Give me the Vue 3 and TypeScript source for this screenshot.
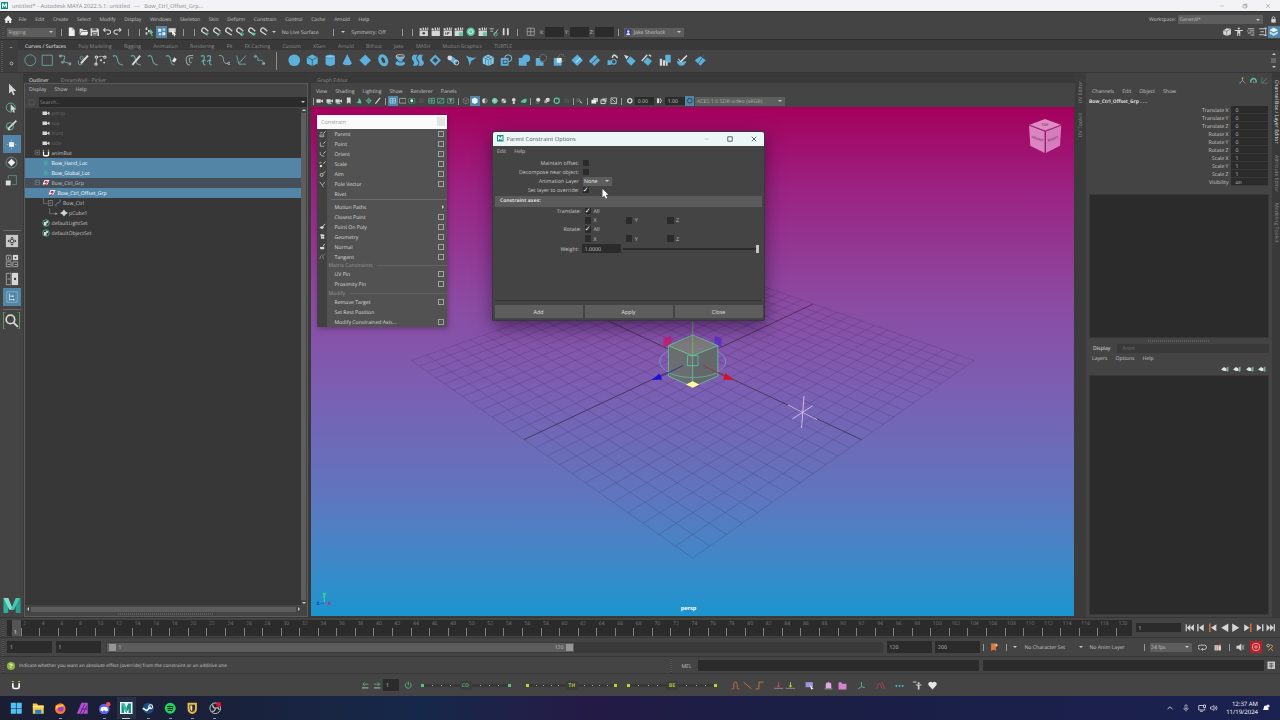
<template>
  <div class="app">
    <header class="titlebar">
      <svg class="ic" viewBox="0 0 16 16" v-html="icons.maya" />
      <span class="title">untitled* - Autodesk MAYA 2022.5.1: untitled &nbsp; --- &nbsp; Bow_Ctrl_Offset_Grp...</span>
      <span class="win-buttons">
        <svg v-for="b in ['min', 'restore', 'close']" :key="b" class="ic" viewBox="0 0 16 16" v-html="icons[b]" />
      </span>
    </header>

    <nav class="menubar">
      <svg class="ic" viewBox="0 0 16 16" v-html="icons.home" />
      <span v-for="m in mainMenu" :key="m">{{ m }}</span>
      <div class="workspace">
        <span>Workspace:</span>
        <div class="select">General*<i class="caret" /></div>
        <svg class="ic" viewBox="0 0 16 16" v-html="icons.lock" />
      </div>
    </nav>

    <div class="tools">
      <i class="grip" />
      <div class="select mode">Rigging<i class="caret" /></div>
      <div v-for="(c, i) in toolCells" :key="i" class="cell" :class="[c.kind, { on: c.on }]" :style="{ width: c.w + 'px' }">
        <svg v-if="c.kind === 'icon'" class="ic" viewBox="0 0 16 16" v-html="icons[c.v]" />
        <i v-else-if="c.kind === 'rule'" class="bar" />
        <i v-else-if="c.kind === 'arrow'" class="caret" />
        <template v-else>{{ c.v }}</template>
      </div>
      <div class="select user"><svg class="ic" viewBox="0 0 16 16" v-html="icons.user" />Jake Sherlock<i class="caret" /></div>
      <div class="tools-right">
        <span v-for="n in ['modelkit', 'human', 'attrs', 'toolset', 'layers']" :key="n" class="cell" :class="{ on: n === 'layers' }">
          <svg class="ic" viewBox="0 0 16 16" v-html="icons[n]" />
        </span>
      </div>
    </div>

    <div class="shelf">
      <div class="shelf-side"><i class="grip" /><b>–</b><svg class="ic" viewBox="0 0 16 16" v-html="icons.gear" /></div>
      <div class="shelf-body">
        <div class="shelf-tabs">
          <span v-for="(t, i) in shelfTabs" :key="t" :class="{ active: i === 0 }">{{ t }}</span>
        </div>
        <div class="shelf-icons">
          <span v-for="(n, i) in shelfIcons" :key="i" class="cell">
            <i v-if="n === '|'" class="divider" />
            <svg v-else class="ic" viewBox="0 0 16 16" v-html="icons[n]" />
          </span>
          <div class="spinner"><i class="up" /><i class="knob" /><i class="caret" /></div>
        </div>
      </div>
    </div>

    <main class="main">
      <aside class="toolbox">
        <span v-for="(t, i) in toolbox" :key="i" class="tool" :class="[t.cls]">
          <svg class="ic" viewBox="0 0 16 16" v-html="icons[t.icon]" />
        </span>
        <svg class="ic logo" viewBox="0 0 16 16" v-html="icons.mayaBig" />
      </aside>

      <section class="outliner">
        <div class="panel-tabs"><span class="active">Outliner</span><span>DreamWall - Picker</span></div>
        <div class="outliner-box">
          <div class="panel-menu"><span>Display</span><span>Show</span><span>Help</span></div>
          <div class="search">
            <svg class="ic" viewBox="0 0 16 16" v-html="icons.dashed" />
            <div class="search-field">Search...<i class="caret" /></div>
          </div>
          <div class="tree-wrap">
            <ul class="tree">
              <li v-for="n in nodes" :key="n.name" :class="n.state" :style="{ paddingLeft: n.indent + 'px' }">
                <svg v-if="n.box" class="ic twig" viewBox="0 0 16 16" v-html="icons[n.box]" />
                <svg class="ic" viewBox="0 0 16 16" v-html="icons[n.icon]" />
                <span>{{ n.name }}</span>
              </li>
            </ul>
            <div class="vscroll"><i class="up" /><i class="track" /><i class="caret" /></div>
          </div>
          <div class="hscroll"><i class="left" /><i class="track" /><i class="right" /></div>
          <i class="dots" />
        </div>
      </section>

      <section class="view-panel">
        <div class="panel-tabs"><span>Graph Editor</span></div>
        <div class="panel-menu">
          <span v-for="m in ['View', 'Shading', 'Lighting', 'Show', 'Renderer', 'Panels']" :key="m">{{ m }}</span>
        </div>
        <div class="panel-tools">
          <div v-for="(c, i) in panelCells" :key="i" class="cell" :class="[c.kind, { on: c.on }]" :style="{ width: c.w + 'px' }">
            <svg v-if="c.kind === 'icon'" class="ic" viewBox="0 0 16 16" v-html="icons[c.v]" />
            <i v-else-if="c.kind === 'rule'" class="bar" />
            <template v-else>{{ c.v }}</template>
          </div>
          <div class="select aces">ACES 1.0 SDR-video (sRGB)<i class="caret" /></div>
        </div>

        <div class="viewport">
          <svg class="scene" viewBox="311 107 763 509">
            <path :d="gridPath" stroke="#3b2a58" stroke-opacity="0.38" stroke-width="0.6" fill="none" />
            <path :d="axisPath" stroke="#3a2c40" stroke-opacity="0.85" stroke-width="0.9" fill="none" />
            <g fill="none" stroke="#d9c4f5" stroke-width="0.9">
              <path d="M804 396L801.5 428M788 405L817 419.5M812.7 405.7L792.4 419" />
            </g>
            <path d="M663.5 338l8-2v9l-8 2z" fill="#b92682" />
            <path d="M714.5 336l7 2v9l-7-2z" fill="#6234c4" />
            <ellipse cx="692.7" cy="361.5" rx="33" ry="16" fill="none" stroke="#7e9bd8" stroke-width="0.8" />
            <path d="M692.7 335L717.8 345.7V376L692.7 387L668.4 376V345.7z" fill="#6a6e70" />
            <path d="M692.7 335L717.8 345.7L692.7 355.7L668.4 345.7z" fill="#7b7a7c" />
            <path d="M692.7 355.7L717.8 345.7V376L692.7 387z" fill="#63686a" />
            <path d="M692.7 335L717.8 345.7V376L692.7 387L668.4 376V345.7zM668.4 345.7L692.7 355.7L717.8 345.7M692.7 355.7V387M687.4 355.7h10.6v10h-10.6z" fill="none" stroke="#67c9a2" stroke-width="0.8" />
            <path d="M668.4 372.500Q678 377.500 692.7 377.500T717.800 372.500" fill="none" stroke="#62b7a5" stroke-width="0.8" />
            <path d="M692.7 321V355" stroke="#6fbf5a" stroke-width="0.9" />
            <path d="M683 365.500L660 377" stroke="#2b2f90" stroke-width="0.9" />
            <path d="M703 365.500L726 377" stroke="#a02c48" stroke-width="0.9" />
            <path d="M651.6 380L659.500 373.500L662.200 379.500z" fill="#1a10d8" />
            <path d="M733.5 380L725.500 373L723.200 379.500z" fill="#d80f24" />
            <path d="M686 384.500L692.700 381.300L699.300 384.500L692.700 387.800z" fill="#fdfb9a" />
            <g class="viewcube">
              <path d="M1045 119L1061.3 125L1045.3 131L1029 125z" fill="#de8bc6" />
              <path d="M1029 125.500L1044.700 131.500V153L1030.300 145.700z" fill="#dd85c4" />
              <path d="M1061.3 125.500L1045.900 131.500V153L1060 145.700z" fill="#d67cbd" />
              <path d="M1029 125L1045.3 131L1061.3 125M1045.3 131V153" stroke="#8b2a6c" stroke-width="0.9" fill="none" />
              <text x="1045" y="125.900">TOP</text>
              <text x="1037" y="140" transform="rotate(20 1037 140)">FRONT</text>
              <text x="1053.500" y="140" transform="rotate(-20 1053.500 140)">RIGHT</text>
            </g>
            <g stroke-width="0.9" fill="none">
              <path d="M324.300 603V596" stroke="#39e08a" />
              <path d="M324.300 603l4 1" stroke="#7c6a98" />
              <path d="M324.300 603l-4 0.500" stroke="#2b5de0" />
            </g>
            <g class="axis">
              <text x="322.500" y="595.500" fill="#35e58c">y</text>
              <text x="316.500" y="604.500" fill="#1838d8">z</text>
              <text x="328" y="604.500" fill="#a04070">x</text>
            </g>
            <text class="camera" x="688.500" y="610">persp</text>
          </svg>

          <div class="tearoff">
            <div class="tearoff-title">Constrain<i /></div>
            <div class="tearoff-body">
              <template v-for="(it, i) in constrainMenu" :key="i">
                <div v-if="it.type === 'sep'" class="sep" />
                <div v-else-if="it.type === 'head'" class="section">{{ it.label }}<i /></div>
                <div v-else class="item">
                  <span class="gutter"><svg v-if="it.icon" class="ic" viewBox="0 0 16 16" v-html="icons[it.icon]" /></span>
                  <span class="label">{{ it.label }}</span>
                  <i v-if="it.type === 'sub'" class="right" />
                  <i v-else-if="it.type === 'opt'" class="optbox" />
                </div>
              </template>
            </div>
          </div>

          <div class="dialog">
            <div class="dialog-title">
              <svg class="ic" viewBox="0 0 16 16" v-html="icons.maya" />
              <span>Parent Constraint Options</span>
              <svg v-for="b in ['min', 'max', 'closeBlack']" :key="b" class="ic btn" viewBox="0 0 16 16" v-html="icons[b]" />
            </div>
            <div class="dialog-menu"><span>Edit</span><span>Help</span></div>
            <div class="dialog-body">
              <div class="field-row"><label>Maintain offset:</label><i class="check" /></div>
              <div class="field-row"><label>Decompose near object:</label><i class="check" /></div>
              <div class="field-row"><label>Animation Layer</label><div class="select layer">None<i class="caret" /></div></div>
              <div class="field-row"><label>Set layer to override:</label><i class="check ticked">✓</i></div>
              <div class="group-head">Constraint axes:</div>
              <template v-for="g in ['Translate:', 'Rotate:']" :key="g">
                <div class="field-row axes"><label>{{ g }}</label><i class="check ticked">✓</i><span>All</span></div>
                <div class="field-row axes">
                  <label />
                  <span v-for="a in ['X', 'Y', 'Z']" :key="a" class="axis-opt"><i class="check" />{{ a }}</span>
                </div>
              </template>
              <div class="field-row weight"><label>Weight:</label><div class="num">1.0000</div><div class="slider"><i /></div></div>
            </div>
            <div class="dialog-buttons"><button>Add</button><button>Apply</button><button>Close</button></div>
          </div>

          <svg class="pointer" viewBox="0 0 16 16" v-html="icons.cursor" />
        </div>
      </section>

      <div class="side-tabs"><span>UV Editor</span><span>UV Toolkit</span></div>

      <section class="channels">
        <div class="channel-icons">
          <svg v-for="n in ['manip', 'speed', 'hyper']" :key="n" class="ic" viewBox="0 0 16 16" v-html="icons[n]" />
        </div>
        <div class="panel-menu"><span>Channels</span><span>Edit</span><span>Object</span><span>Show</span></div>
        <div class="node-name">Bow_Ctrl_Offset_Grp . . .</div>
        <div class="attrs">
          <div v-for="a in attributes" :key="a[0]" class="attr"><span>{{ a[0] }}</span><div>{{ a[1] }}</div></div>
        </div>
        <div class="well top" />
        <i class="dots" />
        <div class="layer-tabs"><span class="active">Display</span><span>Anim</span></div>
        <div class="panel-menu layer-menu"><span>Layers</span><span>Options</span><span>Help</span></div>
        <div class="layer-icons">
          <svg v-for="n in 4" :key="n" class="ic" viewBox="0 0 16 16" v-html="icons.layer" />
        </div>
        <div class="well bottom" />
      </section>

      <div class="far-tabs"><span class="active">Channel Box / Layer Editor</span><span>Attribute Editor</span><span>Modeling Toolkit</span></div>
    </main>

    <div class="timeline">
      <i class="grip" />
      <div class="frames">
        <div class="current">1</div>
        <div v-for="f in frames" :key="f" class="frame">{{ f }}</div>
      </div>
      <div class="num frame-field">1</div>
      <div class="playback">
        <svg v-for="n in playback" :key="n" class="ic" viewBox="0 0 16 16" v-html="icons[n]" />
      </div>
    </div>

    <div class="range">
      <i class="grip" />
      <div class="num">1</div>
      <div class="num">1</div>
      <div class="range-track"><div class="range-bar"><i />1<span>120</span><i /></div></div>
      <div class="num">120</div>
      <div class="num">200</div>
      <div v-for="(c, i) in rangeCells" :key="i" class="cell" :class="[c.kind, { red: c.v === 'autokey' }]" :style="{ width: c.w + 'px' }">
        <svg v-if="c.kind === 'icon'" class="ic" viewBox="0 0 16 16" v-html="icons[c.v]" />
        <i v-else-if="c.kind === 'rule'" class="bar" />
        <i v-else-if="c.kind === 'arrow'" class="caret" />
        <div v-else-if="c.kind === 'drop'" class="select">{{ c.v }}<i class="caret" /></div>
        <template v-else>{{ c.v }}</template>
      </div>
    </div>

    <div class="helpline">
      <i class="grip" />
      <b class="q">?</b>
      <span class="help-text">Indicate whether you want an absolute effect (override) from the constraint or an additive one</span>
      <i class="grip" />
      <span class="mel">MEL</span>
      <div class="cmd" />
      <div class="cmd" />
      <svg class="ic" viewBox="0 0 16 16" v-html="icons.script" />
    </div>

    <div class="animbot">
      <svg class="ic magnet" viewBox="0 0 16 16" v-html="icons.magnet" />
      <svg class="ic" viewBox="0 0 16 16" v-html="icons.nudgeL" />
      <svg class="ic" viewBox="0 0 16 16" v-html="icons.nudgeR" />
      <div class="num">1</div>
      <svg class="ic power" viewBox="0 0 16 16" v-html="icons.power" />
      <div v-for="t in tweens" :key="t.label" class="tween" :class="t.color" :style="{ width: t.w + 'px' }">
        <i class="sq" />
        <i v-for="n in t.dots" :key="'l' + n" class="dot" />
        <b>{{ t.label }}</b>
        <i v-for="n in t.dots" :key="'r' + n" class="dot" />
        <i class="sq" />
      </div>
      <div v-for="(c, i) in animCells" :key="i" class="cell" :style="{ width: c.w + 'px' }">
        <svg v-if="c.kind === 'icon'" class="ic" viewBox="0 0 16 16" v-html="icons[c.v]" />
      </div>
    </div>

    <footer class="taskbar">
      <span v-for="a in taskApps" :key="a" class="app-icon" :class="{ open: openApps.includes(a), focused: a === 'mayaTask' }">
        <svg class="ic" viewBox="0 0 16 16" v-html="icons[a]" />
      </span>
      <div class="tray">
        <svg v-for="n in ['chevron', 'mic', 'screen', 'volume']" :key="n" class="ic" :class="n" viewBox="0 0 16 16" v-html="icons[n]" />
        <div class="clock"><span>12:37 AM</span><span>11/19/2024</span></div>
        <svg class="ic bell" viewBox="0 0 16 16" v-html="icons.bell" />
      </div>
    </footer>
  </div>
</template>

<script setup lang="ts">
interface Cell {
  kind: string
  v: string
  w: number
  on?: boolean
}

interface TreeNode {
  name: string
  icon: string
  indent: number
  box?: string
  state?: string
}

interface MenuEntry {
  type: 'item' | 'opt' | 'sub' | 'sep' | 'head'
  label?: string
  icon?: string
}

const blue = '#5db0da'
const w = '#d6d6d6'
const teal = '#59c9a5'

const line = (d: string, color = w, width = 1.5) =>
  `<path d="${d}" fill="none" stroke="${color}" stroke-width="${width}"/>`
const fill = (d: string, color = w) => `<path d="${d}" fill="${color}"/>`
const dot = (x: number, y: number, r: number, color = w) => `<circle cx="${x}" cy="${y}" r="${r}" fill="${color}"/>`
const ring = (x: number, y: number, r: number, color = w, width = 1.3) =>
  `<circle cx="${x}" cy="${y}" r="${r}" fill="none" stroke="${color}" stroke-width="${width}"/>`

const clap = fill('M1 6h14v9H1zM1 2l3 0l1 3H1zM6 1l2 0l1 4H6.500zM10 1l2 0l1 4h-2.500zM14 1h1.500v4H14z')
const camera = fill('M1 5h9v7H1zM10 8l5-3v7l-5-3z')
const magnetShape = line('M12 13L4.500 8.500A3.600 3.600 0 0 1 9 2.500L14 7', w, 2.200)

const icons: Record<string, string> = {
  maya: fill('M0 0h16v16H0z', '#0f8f83') + fill('M2.500 13V3h2.800L8 8l2.700-5h2.800v10h-2.500V7.500L8 12L5 7.500V13z', '#fff'),
  mayaTask: fill('M0 0h16v16H0z', '#e9f5f3') + fill('M2 14V2h3.500L8 8l2.500-6H14v12h-3V8.500L8 14L5 8.500V14z', '#138f86') + fill('M2 2h3.500L9.500 11L8 14z', '#3dbfae'),
  mayaBig: fill('M0 15V1h4.500v14z', '#2fb09a') + fill('M0 1h4.500L9 12H5.500z', '#7fe0cf') + fill('M11.500 1H16v14h-4.500z', '#2ca08e') + fill('M11.500 1H15L10 12H6.800z', '#45c4ae'),
  min: line('M2 8h12', '#777', 0.9),
  restore: line('M3 5h8v8H3zM6 5V3h7v8h-2', '#666', 1.1),
  close: line('M3 3l10 10M13 3L3 13', '#666', 1.1),
  max: line('M2 2h12v12H2z', '#222', 1.8),
  closeBlack: line('M2 2l12 12M14 2L2 14', '#222', 1.8),
  home: fill('M8 1L16 9h-2.500v6h-4v-4h-3v4h-4V9H0z', '#eee'),
  lock: fill('M3 7h10v8H3z') + line('M5 7V4.500a3 3 0 0 1 6 0V7', w, 1.8),
  file: fill('M3 1h6l4 4v10H3z', '#eee') + line('M9 1v4h4', '#888', 1),
  folder: fill('M1 3h5l1 2h7v2H4L1 13z', '#ddd') + fill('M4.500 8H16l-2.500 6H1.500z', '#eee'),
  save: fill('M1 2h12l2 2v11H1z') + fill('M4 2h7v4H4zM3.500 9h9v6h-9z', '#555') + fill('M5 10.500h6v1.200H5zM5 13h6v1H5z'),
  undo: line('M3 5h8a3.500 3.500 0 0 1 0 7H8M5.500 2L2.500 5L5.500 8', w, 1.700),
  redo: line('M13 5H5a3.500 3.500 0 0 0 0 7h3M10.500 2l3 3L10.500 8', w, 1.700),
  selH: fill('M1 1h3v4H1zM5 5h3v4H5zM1 9h3v4H1z') + fill('M9 3l5 7h-2.500l1.500 5h-2l-1-4l-2 1z', teal),
  selO: fill('M2 3h5v5H2zM9 9h5v5H9z', '#e8f2f8') + dot(11.500, 4.500, 2.500, '#9bd6f0') + dot(5, 12, 2, '#bfe7f7'),
  selC: fill('M1 2h12v7H1z') + fill('M7 5l7 8h-3l1 3l-2-1l-1-3l-2 1z', '#fff'),
  snap1: magnetShape + line('M9 11h6M12 8v7', teal, 1),
  snap2: magnetShape + line('M8 14q5 1 6-6', teal, 1.500),
  snap3: magnetShape + dot(12, 13, 1.200),
  snap4: magnetShape + ring(11.500, 12, 2.500, teal),
  snap5: magnetShape + fill('M9 9l6 2l-3 4l-4-2z', teal),
  snap6: magnetShape,
  clap: clap + dot(8, 10.500, 2.200, '#444'),
  clapPlain: clap,
  clapIpr: clap + fill('M4 9h1.500v4H4zM7 9h4v2H8.500v2H7z', '#444'),
  clapGear: clap + dot(11.500, 12, 3.600, teal),
  sphere: dot(8, 8, 7, teal) + ring(8, 8, 3.500, '#e0f5ef', 1.500),
  light: line('M1 3h7M2 7h5M9 13L15 4', w, 1.300) + ring(11, 12, 3, teal),
  pause: fill('M3 2h3v12H3zM10 2h3v12h-3z'),
  gridbox: line('M2 2h12v12H2zM8 2v12M2 8h12', '#aaa', 1.300),
  user: fill('M1 1h14v14H1z', '#2b3a8f') + dot(8, 6, 3, '#dfe3ff') + fill('M3 15q0-5 5-5t5 5z', '#dfe3ff'),
  modelkit: fill('M2 6l6-4l7 1v9l-7 3l-6-3z') + line('M8 7v8M2 6l6 1l7-4', '#666', 1),
  human: dot(8, 2.500, 1.800) + fill('M1 5h14v1.800h-4.500V15H9v-4H7v4H5.500V6.800H1z'),
  attrs: line('M3 3h11M6 6.500h8M3 10h6M8 13.500h6M2 6.500h2M11 10h3', w, 1.400),
  toolset: line('M2 3h9M4 8h6M2 13h9M13 2v12M10 2h5M10 14h5', w, 1.500),
  layers: fill('M8 1l7 4l-7 4l-7-4z', '#e6f4fb') + fill('M1 7l7 4l7-4v4l-7 4l-7-4z', '#c2dcea'),
  gear: ring(8, 8, 4.500, '#ccc', 2.500),
  // curve shelf
  circle: ring(8, 8, 7, '#67a9a6', 1.100),
  square: line('M1.500 1.500h13v13h-13z', '#67a9a6', 1.100),
  cv: line('M3 2.500q6-1 4 3t1 5q3 0 5 2', '#67a9a6', 1.300) + fill('M0 1h3.500v3H0zM3 9h3v3H3zM12.500 11h3v3.500h-3z', '#8a9a9a'),
  pencil: line('M2 8q-2 8 5 5', '#67a9a6', 1.200) + line('M5 12L14 2', '#ddd', 2.600) + ring(6, 5, 2, '#67a9a6', 1),
  arc3: line('M3 14V8q0-5 6-5t5 1', '#aaa', 1.100) + ring(2.500, 13, 1.500) + dot(9, 8, 1.400) + dot(13, 11, 1.200) + ring(14, 4, 1.500) + ring(3, 4, 1.500),
  curve: line('M1 3q5-3 6 4t7 7', '#67a9a6', 1.400),
  curveCut: line('M1 3q5-3 6 4t7 7', '#67a9a6', 1.400) + line('M3 14L13 2', '#ddd', 2.300),
  curveIns: line('M1 3q5-3 6 4t7 7', '#67a9a6', 1.400),
  curveAdd: line('M1 3q5-3 6 4t5 7', '#67a9a6', 1.400) + fill('M12 4l3 3l-3 4l-3-2z', '#e5e5e5'),
  offset: line('M13 2Q3 1 4 8t5 6M13 5Q7 4 8 8t3 3', '#9aa', 1.300),
  rebuild: line('M1 3q6-3 4 4t2 7M9 3q6-3 4 4t2 7', '#67a9a6', 1.600) + line('M2 10q4-4 5-1M9 10q4-4 5-1', '#67a9a6', 1.300),
  extend: line('M1 2q6-1 6 5t6 5', '#8aa', 1.200) + ring(14, 12, 1.500, '#ccc', 1),
  bend: line('M2 2l3 11h9M5 12L14 2', '#67a9a6', 1.200),
  smooth: line('M2 3q6 0 4 5h4q4 0 2 6', '#67a9a6', 1.200) + ring(3, 3, 1.500, '#9aa', 1) + dot(14, 12, 1.500, '#aaa'),
  // surface shelf
  ball: dot(8, 8, 7.500, blue),
  cube: fill('M8 .5L15 4v8L8 15.500L1 12V4z', blue) + line('M1 4l7 3.500L15 4M8 7.500v8', '#2f5f7a', 1.100),
  cyl: fill('M2 3v10q6 4.500 12 0V3z', blue) + '<ellipse cx="8" cy="3.200" rx="6" ry="2.300" fill="#79c6ea" stroke="#3a6f8c" stroke-width=".7"/>',
  cone: fill('M8 0l6 12.500q-6 4-12 0z', blue),
  plane: fill('M8 0.500L15.500 8L8 15.500L.5 8z', blue),
  torus: '<ellipse cx="8" cy="8" rx="4" ry="6" fill="none" stroke="#5db0da" stroke-width="4" transform="rotate(-25 8 8)"/>',
  revolve: fill('M2 2q6 5 12 0q-1 5-4 6q5 2 4 5q-6 4-12 0q-1-3 4-5Q2 7 2 2z', blue) + '<ellipse cx="8" cy="2.500" rx="5.500" ry="1.700" fill="#444" stroke="#ddd" stroke-width="1"/>' + line('M5 9.500q4 2 8 0', '#333', 1),
  loft: fill('M2 1h5q-3 5 0 8t-1 6H1q3-4 0-7t1-7zM9 1h5q-3 5 0 8t-1 6H8q3-4 0-7t1-7z', blue),
  planar: line('M8 2.500L13.500 8L8 13.500L2.500 8z', blue, 2.600),
  extrude: line('M4 5l8 6', blue, 6) + dot(3.500, 5, 3, w) + ring(12, 11, 3, w, 1.100),
  birail: fill('M1 2q6 4 14 2l-7 5l-2 6q-1-8-5-13z', blue),
  boundary: fill('M8 .5L15 4v8L8 15.500L1 12V4z', '#8ccbe8') + line('M1 4l7 3.500L15 4M8 7.500v8M4.500 2.200L11.500 6v7.500M11 2.200L4.500 6v7.500', '#2f6f8a', .8),
  booleanA: fill('M1 5h10v10H1z', blue) + ring(10.500, 5.500, 4.500, '#8ccbe8', 1.200) + line('M4 8h5v4H4z', '#335', 1),
  booleanB: fill('M1 5h10v10H1z', blue) + dot(10.500, 5.500, 5, blue),
  booleanC: fill('M1 5h5q0 5 5 6v4H1z', blue) + '<circle cx="10.500" cy="5" r="4.500" fill="none" stroke="#aaa" stroke-width=".8" stroke-dasharray="1.500 1"/>',
  booleanD: fill('M1 5h10v10H1z', blue) + fill('M5 5h6v6H5z', '#eee') + '<circle cx="11" cy="5" r="4.500" fill="none" stroke="#aaa" stroke-width=".8" stroke-dasharray="1.500 1"/>',
  proj: fill('M8 0.500L15.500 8L8 15.500L.5 8z', blue) + line('M6 11L12 5', '#aee0f5', 1.300),
  trim: fill('M9 1l3 3L4 12L1 9zM12.500 5l3 3L8 15.500L5 12.500z', blue),
  attach: line('M2 11h5', blue, 6) + ring(10, 10, 3, blue, 1.500) + line('M8 5q1-5 4-3l3 3', w, 2),
  detach: fill('M8 3l7 6l-6 6l-6-6z', blue) + fill('M0 1l6 2l-3 4z', w),
  openclose: fill('M8 4l6 5l-5 6l-6-5z', blue) + line('M1 9l7-8M10 1l3 2', w, 1.800),
  insert: fill('M8 1h7v10H8z', blue) + fill('M1 6h3v9H1zM5 8h3v7H5zM9 10h2v5H9z', w),
  sculpt: fill('M1 9q7 2 12 0q-1 6-6 6t-6-6z', blue) + line('M6 10l8-8', '#e8e8e8', 1.800) + line('M3 6l3 4', w, 1.300),
  wrap: fill('M8 3l7 5l-7 7l-7-7z', blue) + line('M5 13L13 1', '#2f6f8a', 1.200),
  // toolbox
  arrow: fill('M5 1v12l3-2.500l2 4.500l2-1l-2-4.300h4z'),
  lasso: ring(7, 8, 5.500, teal, 1) + fill('M7 4v9l2.200-2l1.500 3.500l1.500-.8l-1.500-3.200h3z'),
  paint: ring(6, 9, 4.500, teal, 1) + line('M5 11L14 2', w, 2) + fill('M3 9l4 4l-3 1z'),
  move: fill('M5 5h6v6H5z', '#eee') + line('M8 2v2M8 12v2M2 8h2M12 8h2', '#86c3e2', 1),
  rotate: fill('M8 3.500l4.500 4.500L8 12.500L3.500 8z', '#eee') + ring(8, 8, 6.700, '#7aa', .9),
  scale: fill('M1 8h6v6H1z', '#ddd') + line('M4 6V2h10v11H9', '#5fa08f', .9),
  single: fill('M1 1h14v14H1z', '#c9c9c9') + fill('M8 3l2 2H6zM8 13l2-2H6zM3 8l2-2v4zM13 8l-2-2v4z', '#333') + ring(8, 8, 2, '#333', 1),
  quad: line('M1.500 1.500h5.500v5.500H1.500zM9 9h5.500v5.500H9zM1.500 9H7v5.500H1.500z', '#aaa', 1) + fill('M9 1h6v6H9z') + line('M4 3v3M11 12h3M3 12h3', '#aaa', 1) + dot(12, 4, 1, '#333'),
  dual: line('M1.500 1.500h5.500v13H1.500z', '#aaa', 1) + fill('M8 1h7v14H8z') + dot(11.500, 8, 1.300, '#333') + line('M3 8h3', '#aaa', 1),
  outl: line('M2 2h12v12H2z', '#8fbfd6', .8) + line('M5 4v8M5 7h3M5 11h4', '#cfe9f5', .9) + dot(9, 7, .9, '#fff') + dot(10, 11, .9, '#fff'),
  zoomsel: ring(7, 7, 4, w, 1.600) + line('M10 10l4 4', w, 1.800) + line('M2.500 0H.5v16h2M13.500 0h2v16h-2', '#5fa05f', .9),
  dashed: '<path d="M2 2h12v12H2z" fill="none" stroke="#888" stroke-dasharray="3 2"/>',
  // outliner
  camera: camera,
  magnet: line('M3 5v6q0 2.500 2.500 2.500h5Q13 13.500 13 11V5', '#fff', 2.600) + fill('M1.700 1.500h2.600v2H1.700z', '#e8b04a') + fill('M11.700 1.500h2.600v2h-2.600z', '#e8b04a'),
  locator: line('M8 2v12M2 8h12M4 4l8 8M12 4l-8 8', '#3fb8a8', 1.300),
  xform: fill('M5 2h10l-4 9H1z', '#f2f2f2') + line('M4 14L12 5', '#c22b3b', 1.800) + fill('M6 4h5l-2 4H5z', '#c22b3b'),
  crv: line('M4 15Q1 10 8 8t4-7', '#7aa', 1.400),
  mesh: fill('M0 8l5-3l3-4l3 4l5 3l-5 3l-3 4l-3-4z', '#cfd4d4'),
  set: ring(8, 8, 6.500, teal, 1.500) + fill('M4 6h5v7H4z', '#ddd') + dot(10, 6, 2.500, '#9be0ca'),
  plus: line('M2.500 3h10v10h-10zM7.500 5v6M4.500 8h6', '#999', 1),
  minus: line('M2.500 3h10v10h-10zM4.500 8h6', '#999', 1),
  branch: line('M1 0v9h6', '#888', 1) + line('M8.500 4h7v8h-7zM10 8h4', '#999', 1),
  leaf: line('M1 0v9h9', '#888', 1) + fill('M10 7l4 2l-4 2z', '#aaa'),
  // viewport toolbar
  camT: camera + line('M3 14h9', teal, 2.500),
  book: fill('M4 1h8v14l-4-4l-4 4z'),
  bird: fill('M2 12q6 0 6-10q7 5 5 12z', teal),
  target: ring(8, 8, 4, teal, 1.500) + line('M8 1v14M1 8h14', teal, 1.200),
  pen: line('M3 14L13 2', w, 2.500),
  grid4: line('M2 3h12v10H2zM8 3v10M2 8h12', '#a9dcef', 1.500),
  gate: line('M1 3h14v10H1z', '#bbb', 1.500),
  gateT: fill('M1 2h14v12H1z', '#204a3c') + line('M1.500 3h13v10h-13z', '#7fbfa6', 1) + dot(8, 8, 3, '#e5fff4'),
  dim: fill('M2 3h12v10H2z', '#4f4f4f'),
  gateG: line('M1.500 3h13v10h-13zM8 3v10M1 8h14', teal, 1.500),
  gateX: line('M1.500 3h13v10h-13zM4 11L12 5', teal, 1.500),
  gateI: line('M1.500 3h13v10h-13z', teal, 1.300) + line('M5 6h6M8 6v5', w, 1.500),
  wire: line('M8 1l6 3.500v7L8 15l-6-3.500v-7zM2 4.500L8 8l6-3.500M8 8v7', '#999', 1),
  shaded: fill('M8 1l6 3.500v7L8 15l-6-3.500v-7z', '#e9f6fb'),
  half: dot(8, 8, 5.500) + fill('M8 2.500a5.500 5.500 0 0 1 0 11z', '#666'),
  tex: dot(8, 8, 6, teal) + line('M8 2v12M2 8h12', '#ddd', 1.200),
  checker: dot(8, 8, 5.500, '#888') + fill('M4 4h4v4H4zM8 8h4v4H8z', '#ddd'),
  bulb: dot(8, 6, 4) + fill('M6 10h4v5H6z'),
  shadow: fill('M1 11q4-7 12-8q3 6-2 10z', teal),
  whiteball: dot(9, 6, 4.500) + fill('M4 12h7v2H4z', '#777'),
  motion: dot(10, 6, 4.500) + dot(6, 10, 3.500, '#aaa'),
  ao: ring(8, 8, 5.500, teal, 2.500),
  iso: line('M2 4h6v5H2z', '#999', 1) + fill('M7 6l7 8l-4-1z'),
  stack: fill('M5 2h10v8H5z', '#bbb') + fill('M1 6h10v8H1z', '#eee'),
  stackB: fill('M5 2h10v8H5z', '#888') + line('M2 6h9v8H2z', '#eee', 1.800),
  expand: line('M2 2h12v12H2zM4 4l8 8', '#eee', 1.500),
  expo: ring(8, 8, 4.500, w, 3),
  gamma: fill('M2 3h5v10H2z') + line('M9 3q5 5 0 10', w, 2),
  cm: ring(8, 8, 5, '#1d4a5b', 2),
  // constraints
  cParent: line('M2 4h6M2 9h9v4H2z', w, 1.500) + line('M10 6l5-5', w, 2),
  cPoint: line('M3 3v9h9', w, 1.500) + line('M10 6l5-5', w, 2),
  cOrient: line('M3 3q-2 8 9 9', w, 1.500) + line('M10 6l5-5', w, 2),
  cScale: line('M2 3h4M2 3v4', w, 1.200) + fill('M2 9h5v5H2z') + line('M10 6l5-5', w, 2),
  cAim: ring(6, 9, 3.500, w, 1.800) + line('M9 6l5-5', w, 2),
  cPole: line('M2 2l5 7l3 5M8 9l6-7', w, 1.500),
  cPoly: fill('M1 10l6-3l5 2l-5 5z') + line('M9 8l5-6', w, 2),
  cGeo: fill('M3 3h9v10H5z') + line('M6 8h5M9 4l5-3', '#555', 1.200),
  cNormal: fill('M2 9h10v5H3z') + line('M9 8l4-6', w, 2),
  cTangent: line('M2 14q1-9 4-9t4 9M10 6l4-4', '#aaa', 1.300),
  cursor: fill('M4 0v13l3-2.800l2.200 5l2.300-1l-2.200-4.900h4z', '#fff'),
  manip: line('M8 8V3M8 8l5 5M8 8l-5 5', '#ccc', 1.200) + dot(8, 2.500, 2, '#d7b13d') + dot(13, 13, 2, '#d04545') + dot(3, 13, 2, '#3f8fd8'),
  speed: line('M3 13A6 6 0 1 1 13 13', teal, 3) + line('M8 10l2 4', w, 1.500),
  hyper: line('M2 1v13h13M2 14L14 2', '#5f9f88', 1.300),
  layer: fill('M0 9l6-5l5 3v5H6z', '#dfe3e3') + fill('M11 5l4-2v9l-3 2z', '#6fae9f'),
  // playback
  first: fill('M1 2h2v12H1zM9 2v12L3 8zM15 2v12L9 8z'),
  prev: fill('M2 2h2.200v12H2zM13 2v12L5 8z'),
  prevKey: fill('M2 1h2.200v14H2z', '#e8743b') + fill('M14 2v12L5 8z'),
  playB: fill('M14 1v14L2 8z'),
  play: fill('M2 1v14L14 8z'),
  nextKey: fill('M12 1h2.200v14H12z', '#e8743b') + fill('M2 2v12l9-6z'),
  next: fill('M12 2h2.200v12H12zM3 2v12l8-6z'),
  last: fill('M13 2h2v12h-2zM7 2v12l6-6zM1 2v12l6-6z'),
  bookmark: fill('M2 1h9v14l-4-3l-5 3z', '#e0783f') + line('M12 1v6M9 4h6', '#ffd0a8', 1.500),
  loop: line('M4 12a4 4 0 0 1 0-8h8a4 4 0 0 1 0 8H7M9 9.500L6.500 12L9 14.500', w, 1.600),
  cache: fill('M1 4h12v10H1z', '#ddd') + line('M4 4v10M8 4v10M11 1v5M8.500 3h6', '#a44', 1.200),
  speaker: fill('M1 5h4l5-4v14l-5-4H1z') + line('M12 4v8M14.500 3v10', w, 1),
  autokey: ring(8, 8, 5, '#f09a9a', 1.300) + line('M5 8h6M8 5v6', '#f09a9a', 1.300),
  runner: ring(4, 5, 2.500, w, 1.300) + line('M8 3l5 3l-4 4l4 5M9 10l-5 4', '#d8a03a', 1.700),
  script: fill('M1 1h14v14H1z', '#ccc') + line('M4 5h8M4 8h8M4 11h8M8 3v11', '#444', 1.200),
  // animBot
  nudgeL: line('M14 6H4M7 2.500L3.500 6L7 9.500', '#57b877', 1.600) + line('M2 13h12', '#bbb', 1.800),
  nudgeR: line('M2 6h10M9 2.500L12.500 6L9 9.500', '#57b877', 1.600) + line('M2 13h12', '#bbb', 1.800),
  power: line('M5 3.500a5.500 5.500 0 1 0 6 0M8 1v7', '#57b877', 1.700),
  tanA: line('M1 14h3q1 0 1-2V5q0-3 3-3t3 3v7q0 2 1 2h3', '#cf7440', 1.500),
  tanB: line('M1 2l14 12', '#cf7440', 1.600),
  tanC: line('M1 14h6V2h8', '#cf7440', 1.600),
  keyR: line('M0 13h16', '#bbb', 1) + fill('M5 8h6l-3 4z', '#d0405c') + line('M8 2v8', '#d0405c', 1.500),
  keyY: line('M0 13h16', '#bbb', 1) + fill('M5 8h6l-3 4z', '#c8d42e') + line('M8 2v8', '#c8d42e', 1.500),
  selset: fill('M1 2h13v9H1z', '#9e95dc') + fill('M9 7l6 7l-3 0l-1 2z', '#fff'),
  ghost: fill('M3 13V7a5 5 0 0 1 10 0v6z', '#e0a8e6') + line('M1 14h14', '#ccc', 1),
  pose: fill('M1 2h5l1 3h8v10H1z', '#d583cf'),
  axisT: line('M8 2v8L2 14M8 10l6 2', '#4fbfa5', 1.500),
  arcR: line('M1 14q2-10 5-10t4 9M10 2q4 4 5 12', '#c93f5a', 1.400),
  more: fill('M1 7h3v3H1zM6.500 7h3v3h-3zM12 7h3v3h-3z', '#43bdc4'),
  mocap: dot(10, 4, 1.800) + fill('M5 6h10v1.800h-3.500V15H8.500V7.800H5zM0 1h6v1.500H0z'),
  heart: fill('M8 15L1.500 8A4 4 0 0 1 8 3a4 4 0 0 1 6.500 5z', '#e6e6e6'),
  // taskbar
  windows: fill('M1 1h6.600v6.600H1zM8.400 1H15v6.600H8.400zM1 8.400h6.600V15H1zM8.400 8.400H15V15H8.400z', '#4fc3f7'),
  explorer: fill('M1 2h5l2 2h7v11H1z', '#f7c948') + fill('M4 10h8v5H4z', '#1e7fd0') + fill('M1 5h14v2H1z', '#ffe08a'),
  firefox: dot(8, 8.500, 6.800, '#ff7a2a') + dot(8.500, 8.500, 3.800, '#9a3fd0') + fill('M2 4q3 1 6 0q5-3 4 2q-5-1-9 3z', '#ffc63a'),
  affinity: fill('M7 1h8v14H1z', '#b04fd0') + line('M5 15L11 3M9 15L14 5M7 9h8', '#5c1f78', 1.200),
  discord: dot(8, 9, 6.800, '#5865f2') + fill('M4 7q4-2 8 0l1 4l-3 1l-1-1H7l-1 1l-3-1z', '#fff') + dot(13, 3, 3, '#ef5350'),
  steam: dot(8, 8, 7, '#1b4f86') + line('M1 8l5 3l5-5', '#fff', 2) + ring(11, 6, 2.500, '#fff', 1.300),
  spotify: dot(8, 8, 7, '#1ed760') + line('M4 6q4-1.500 8 .5M4.500 8.500q3.500-1 7 .5M5 11q3-1 5.500.3', '#111', 1.300),
  shield: fill('M2 1h12v8q0 5-6 6.500Q2 14 2 9z', '#e9b949') + fill('M4.500 3.500h7v5.500q0 3-3.500 4.200Q4.500 12 4.500 9z', '#2a2a2a') + fill('M5.500 4.500H8v7.500q-2.500-1-2.500-3z', '#f3e2b0'),
  obs: ring(8, 8, 6.800, '#ccc', 1.200) + line('M8 8q-4-1-3-5M8 8q4-2 5 2M8 8q0 4-4 4', '#ccc', 1.500) + dot(12.500, 3.200, 3.200, '#e81123'),
  chevron: line('M3 10.500l5-5l5 5', '#fff', 1.500),
  mic: line('M6 2h4v7H6zM3.500 8q0 4 4.500 4t4.500-4M8 12v3', '#ccc', 1.300),
  screen: line('M10 3H1.500v9h12V9M4 14.500h6M11 2h4v5h-4z', '#fff', 1.400),
  volume: line('M1 6h3l4-3v10l-4-3H1zM10 5q2 3 0 6M12.500 3.500q3 4.500 0 9', '#fff', 1.200),
  bell: fill('M2 11q2-2 2-6q4-4 7 0q1 4 3 5l-2 2H3z', '#fff') + dot(12, 4, 3.200, '#dfe9ff')
}

const cells = (kind: string, names: string, width: number, on = ''): Cell[] =>
  names.split(' ').map(v => ({ kind, v, w: width, on: v === on }))
const one = (kind: string, v: string, width: number, on = false): Cell => ({ kind, v, w: width, on })

const mainMenu = ['File', 'Edit', 'Create', 'Select', 'Modify', 'Display', 'Windows', 'Skeleton', 'Skin', 'Deform', 'Constrain', 'Control', 'Cache', 'Arnold', 'Help']

const toolCells: Cell[] = [
  one('rule', '', 10),
  ...cells('icon', 'file folder save undo redo', 11.6),
  one('rule', '', 10),
  one('rule', '', 10.5),
  ...cells('icon', 'selH selO selC', 11.3, 'selO'),
  one('rule', '', 11),
  one('rule', '', 9.5),
  ...cells('icon', 'snap1 snap2 snap3 snap4 snap5 snap6', 11.8),
  one('arrow', '', 8),
  one('text', 'No Live Surface', 50),
  one('rule', '', 11.5),
  one('arrow', '', 8),
  one('text', 'Symmetry: Off', 50),
  one('rule', '', 10),
  one('rule', '', 11),
  ...cells('icon', 'clap clapPlain clapIpr clapGear sphere clapGear light pause', 11.7),
  one('rule', '', 11),
  one('icon', 'gridbox', 16),
  one('text coord', 'X:', 6),
  one('field', '', 19),
  one('text coord', 'Y:', 6),
  one('field', '', 19),
  one('text coord', 'Z:', 6),
  one('field', '', 19),
  one('rule', '', 10)
]

const shelfTabs = ['Curves / Surfaces', 'Poly Modeling', 'Rigging', 'Animation', 'Rendering', 'FX', 'FX Caching', 'Custom', 'XGen', 'Arnold', 'Bifrost', 'Jake', 'MASH', 'Motion Graphics', 'TURTLE']

const shelfIcons = ('circle square cv pencil arc3 curve curveCut curveIns curveAdd offset rebuild extend bend smooth | ' +
  'ball cube cyl cone plane torus revolve loft planar extrude birail boundary booleanA booleanB booleanC booleanD ' +
  'proj trim attach detach openclose insert sculpt wrap').split(' ')

const toolbox = [
  { icon: 'arrow', cls: '' },
  { icon: 'lasso', cls: '' },
  { icon: 'paint', cls: '' },
  { icon: 'move', cls: 'on' },
  { icon: 'rotate', cls: '' },
  { icon: 'scale', cls: '' },
  { icon: 'single', cls: 'layout first' },
  { icon: 'quad', cls: 'layout' },
  { icon: 'dual', cls: 'layout' },
  { icon: 'outl', cls: 'layout on' },
  { icon: 'zoomsel', cls: 'layout find' }
]

const nodes: TreeNode[] = [
  { name: 'persp', icon: 'camera', indent: 17, state: 'muted' },
  { name: 'top', icon: 'camera', indent: 17, state: 'muted' },
  { name: 'front', icon: 'camera', indent: 17, state: 'muted' },
  { name: 'side', icon: 'camera', indent: 17, state: 'muted' },
  { name: 'animBot', icon: 'magnet', indent: 9, box: 'plus' },
  { name: 'Bow_Hand_Loc', icon: 'locator', indent: 17, state: 'selected' },
  { name: 'Bow_Global_Loc', icon: 'locator', indent: 17, state: 'selected' },
  { name: 'Bow_Ctrl_Grp', icon: 'xform', indent: 9, box: 'minus', state: 'parent' },
  { name: 'Bow_Ctrl_Offset_Grp', icon: 'xform', indent: 23, state: 'selected' },
  { name: 'Bow_Ctrl', icon: 'crv', indent: 17.5, box: 'branch' },
  { name: 'pCube1', icon: 'mesh', indent: 23.5, box: 'leaf' },
  { name: 'defaultLightSet', icon: 'set', indent: 17 },
  { name: 'defaultObjectSet', icon: 'set', indent: 17 }
]

const panelCells: Cell[] = [
  one('rule', '', 4),
  ...cells('icon', 'camera camT camT book bird target pen', 9.7),
  one('rule', '', 5),
  ...cells('icon', 'grid4 gate gateT dim gateG gateX gateI', 9.7, 'grid4'),
  one('rule', '', 5),
  ...cells('icon', 'wire shaded half tex checker bulb shadow', 9.7, 'shaded'),
  one('rule', '', 4),
  ...cells('icon', 'whiteball motion ao dim', 9.7),
  one('rule', '', 4.5),
  one('icon', 'iso', 9),
  one('rule', '', 5),
  ...cells('icon', 'stack stackB expand', 9.7),
  one('rule', '', 6),
  one('icon', 'expo', 10),
  one('field', '0.00', 19),
  one('icon', 'gamma', 11),
  one('field', '1.00', 20),
  one('icon', 'cm', 9.7, true)
]

const constrainMenu: MenuEntry[] = [
  { type: 'opt', label: 'Parent', icon: 'cParent' },
  { type: 'opt', label: 'Point', icon: 'cPoint' },
  { type: 'opt', label: 'Orient', icon: 'cOrient' },
  { type: 'opt', label: 'Scale', icon: 'cScale' },
  { type: 'opt', label: 'Aim', icon: 'cAim' },
  { type: 'opt', label: 'Pole Vector', icon: 'cPole' },
  { type: 'item', label: 'Rivet' },
  { type: 'sep' },
  { type: 'sub', label: 'Motion Paths' },
  { type: 'opt', label: 'Closest Point' },
  { type: 'opt', label: 'Point On Poly', icon: 'cPoly' },
  { type: 'opt', label: 'Geometry', icon: 'cGeo' },
  { type: 'opt', label: 'Normal', icon: 'cNormal' },
  { type: 'opt', label: 'Tangent', icon: 'cTangent' },
  { type: 'head', label: 'Matrix Constraints' },
  { type: 'opt', label: 'UV Pin' },
  { type: 'opt', label: 'Proximity Pin' },
  { type: 'head', label: 'Modify' },
  { type: 'opt', label: 'Remove Target' },
  { type: 'item', label: 'Set Rest Position' },
  { type: 'opt', label: 'Modify Constrained Axis...' }
]

const attributes = [
  ['Translate X', '0'],
  ['Translate Y', '0'],
  ['Translate Z', '0'],
  ['Rotate X', '0'],
  ['Rotate Y', '0'],
  ['Rotate Z', '0'],
  ['Scale X', '1'],
  ['Scale Y', '1'],
  ['Scale Z', '1'],
  ['Visibility', 'on']
]

const frames = Array.from({ length: 60 }, (_, i) => (i + 1) * 2)
const playback = ['first', 'prev', 'prevKey', 'playB', 'play', 'nextKey', 'next', 'last']

const rangeCells: Cell[] = [
  one('rule', '', 5),
  one('icon', 'bookmark', 18),
  one('rule', '', 5),
  one('arrow', '', 13),
  one('text', 'No Character Set', 54),
  one('arrow', '', 11),
  one('text', 'No Anim Layer', 53),
  one('rule', '', 9),
  one('drop', '24 fps', 44),
  one('icon', 'loop', 20),
  one('icon', 'cache', 11),
  one('rule', '', 12),
  one('icon', 'speaker', 10),
  one('icon', 'autokey', 20),
  one('icon', 'runner', 9)
]

const tweens = [
  { label: 'CO', dots: 3, w: 90, color: 'green' },
  { label: 'TH', dots: 4, w: 91.5, color: 'yellow' },
  { label: 'BE', dots: 3, w: 90, color: 'yellow' }
]

const animCells: Cell[] = [
  ...cells('icon', 'tanA tanB tanC', 12),
  one('gap', '', 7),
  ...cells('icon', 'keyR keyY', 12),
  one('gap', '', 6),
  one('icon', 'selset', 14),
  one('gap', '', 5),
  ...cells('icon', 'ghost pose', 14),
  one('gap', '', 3),
  one('icon', 'axisT', 18),
  one('icon', 'arcR', 20),
  one('icon', 'more', 18),
  one('icon', 'mocap', 19),
  one('icon', 'heart', 10)
]

const taskApps = ['windows', 'explorer', 'firefox', 'affinity', 'discord', 'mayaTask', 'steam', 'spotify', 'shield', 'obs']
const openApps = ['firefox', 'discord', 'steam', 'spotify', 'shield', 'obs']

// ground plane, u and v run from -1 to 1 along the two floor axes
function project(u: number, v: number) {
  const a = u + v
  const b = u - v
  const d = 1 - 0.1663 * a
  return `${(692.7 + (140.65 * b) / d).toFixed(2)} ${((360.5 + 6 * a) / d).toFixed(2)}`
}

const half = 12
let gridPath = ''
for (let i = -half; i <= half; i++) {
  if (i === 0) continue
  const t = i / half
  gridPath += `M${project(t, -1)}L${project(t, 1)}M${project(-1, t)}L${project(1, t)}`
}
const axisPath = `M${project(0, -1)}L${project(0, 1)}M${project(-1, 0)}L${project(1, 0)}`
</script>

<style>
body {
  background: #3a3a3a;
  overflow: hidden;
}
</style>

<style scoped>
.app {
  width: 1280px;
  height: 720px;
  display: flex;
  flex-direction: column;
  overflow: hidden;
  background: #444;
  color: #c4c4c4;
  font-family: "Open Sans", "Noto Sans", sans-serif;
  font-size: 5.15px;
  line-height: 8px;
  white-space: nowrap;
  text-rendering: geometricPrecision;
}

.app * {
  box-sizing: border-box;
}

.ic {
  display: block;
  flex: none;
  width: 8.5px;
  height: 8.5px;
}

.cell {
  display: flex;
  align-items: center;
  justify-content: center;
  flex: none;
}

.cell.text {
  justify-content: flex-start;
  padding-left: 4px;
}

.cell.coord {
  padding-left: 1px;
}

.cell.field {
  height: 10px;
  background: #2b2b2b;
  justify-content: flex-start;
  padding-left: 3px;
}

.cell.on,
.tool.on {
  background: #5285a6;
}

.bar {
  width: 1px;
  height: 7px;
  background: #999;
}

.grip {
  flex: none;
  width: 2px;
  align-self: stretch;
  background: repeating-linear-gradient(#3a3a3a 0 1px, #555 1px 2px);
}

.caret,
.up,
.left,
.right {
  flex: none;
  width: 0;
  height: 0;
  border: 2.2px solid transparent;
}

.caret {
  border-top: 2.8px solid #c8c8c8;
  border-bottom: 0;
}

.up {
  border-bottom: 2.8px solid #c8c8c8;
  border-top: 0;
}

.left {
  border-right: 2.8px solid #c8c8c8;
  border-left: 0;
}

.right {
  border-left: 2.8px solid #c8c8c8;
  border-right: 0;
}

.select {
  display: flex;
  align-items: center;
  justify-content: space-between;
  background: #5d5d5d;
  height: 9px;
  padding: 0 3px 0 1.5px;
}

.num {
  background: #2b2b2b;
  display: flex;
  align-items: center;
  flex: none;
  padding-left: 3px;
}

.titlebar {
  height: 11px;
  flex: none;
  display: flex;
  align-items: center;
  background: #f3f3f5;
  color: #8a8a8a;
  font-size: 5.7px;
  padding-left: 1px;
}

.titlebar .ic {
  width: 7px;
  height: 7px;
}

.title {
  margin-left: 4px;
}

.win-buttons {
  margin-left: auto;
  display: flex;
  gap: 17px;
  padding-right: 9px;
}

.win-buttons .ic {
  width: 6px;
  height: 6px;
}

.menubar {
  height: 14px;
  flex: none;
  display: flex;
  align-items: center;
  gap: 8.7px;
  padding: 2px 0 0 3.5px;
  border-top: 1px solid #2f2f2f;
  font-size: 5.03px;
}

.menubar > .ic {
  margin-right: -2px;
}

.workspace {
  margin-left: auto;
  display: flex;
  align-items: center;
  gap: 2px;
  margin-right: 3px;
}

.workspace .select {
  width: 85px;
}

.workspace .ic {
  width: 7px;
  height: 7px;
  margin-left: 5px;
}

.tools {
  height: 14px;
  flex: none;
  display: flex;
  align-items: center;
  padding-left: 2px;
}

.tools .grip {
  margin-right: 3px;
}

.tools .mode {
  width: 49px;
  color: #b0b0b0;
}

.tools .cell.icon {
  height: 12px;
}

.tools .cell .ic {
  width: 9.5px;
  height: 9.5px;
}

.select.user {
  width: 60px;
  gap: 2px;
}

.select.user .ic {
  width: 6.5px;
  height: 6.5px;
}

.select.user .caret {
  margin-left: auto;
}

.tools-right {
  margin-left: auto;
  display: flex;
}

.tools-right .cell {
  width: 11.8px;
  height: 12px;
}

.shelf {
  height: 34px;
  flex: none;
  display: flex;
  border-top: 1px solid #2f2f2f;
  border-bottom: 1px solid #363636;
}

.shelf-side {
  width: 18px;
  display: grid;
  grid-template-columns: 4px 1fr;
  grid-template-rows: 14px 18px;
  align-items: center;
  justify-items: center;
  background: #3e3e3e;
}

.shelf-side .grip {
  grid-row: span 2;
}

.shelf-side .ic {
  width: 5px;
  height: 5px;
}

.shelf-body {
  flex: 1;
}

.shelf-tabs {
  height: 10px;
  display: flex;
  align-items: center;
  gap: 12.25px;
  padding: 3px 0 0 7px;
  background: #393939;
  color: #8e8e8e;
  font-size: 5.1px;
}

.shelf-tabs .active {
  color: #e8e8e8;
}

.shelf-icons {
  height: 21px;
  display: flex;
  align-items: center;
  padding-left: 3.2px;
}

.shelf-icons .cell {
  width: 17.65px;
}

.shelf-icons .ic {
  width: 12.5px;
  height: 12.5px;
}

.divider {
  width: 1px;
  height: 18px;
  background: #8d8d8d;
}

.spinner {
  margin-left: auto;
  margin-right: 4px;
  display: flex;
  flex-direction: column;
  align-items: center;
  gap: 3px;
}

.knob {
  width: 5px;
  height: 5px;
  background: #666;
}

.main {
  height: 544px;
  flex: none;
  display: flex;
}

.toolbox {
  width: 23px;
  display: flex;
  flex-direction: column;
  align-items: center;
  padding-top: 7.5px;
}

.tool {
  width: 18px;
  height: 18.2px;
  display: flex;
  align-items: center;
  justify-content: center;
  flex: none;
}

.tool .ic {
  width: 13px;
  height: 13px;
}

.tool.first {
  margin-top: 40px;
  border-top: 1.5px solid #666;
}

.tool.first,
.tool.find {
  height: 22px;
}

.tool.find {
  border-top: 1.5px solid #666;
  margin-top: 3px;
}

.tool.layout .ic {
  width: 14px;
  height: 14px;
}

.tool.find .ic {
  width: 17px;
  height: 17px;
}

.logo {
  width: 18px;
  height: 17px;
  margin-top: auto;
  margin-bottom: 3px;
}

.outliner {
  width: 285px;
  display: flex;
  flex-direction: column;
  background: #3a3a3a;
}

.panel-tabs {
  height: 10px;
  display: flex;
  align-items: center;
  gap: 12px;
  padding: 3px 0 0 6px;
  background: #393939;
  color: #8c8c8c;
}

.panel-tabs .active {
  color: #e6e6e6;
}

.outliner-box {
  height: 533.5px;
  border: 1px solid #5b5b5b;
  background: #444;
  margin-left: 1px;
  display: flex;
  flex-direction: column;
}

.panel-menu {
  height: 12px;
  display: flex;
  align-items: center;
  gap: 8px;
  padding-left: 4px;
}

.outliner-box .panel-menu {
  height: 12.5px;
  padding-bottom: 2px;
}

.search {
  height: 11px;
  display: flex;
  align-items: center;
}

.search .ic {
  width: 7px;
  height: 7px;
  margin: 0 4px 0 2.5px;
}

.search-field {
  flex: 1;
  height: 9.5px;
  background: #2b2b2b;
  display: flex;
  align-items: center;
  justify-content: space-between;
  color: #8a8a8a;
  padding: 0 2.5px 0 1.5px;
}

.tree-wrap {
  flex: 1;
  display: flex;
  background: #373737;
}

.tree {
  flex: 1;
  list-style: none;
  margin: 0;
  padding: 0.3px 0 0;
}

.tree li {
  height: 10px;
  display: flex;
  align-items: center;
  gap: 1.5px;
}

.tree .ic {
  width: 8px;
  height: 8px;
}

.tree .twig {
  width: 7px;
  height: 7px;
  margin-right: -0.5px;
}

.tree li:nth-child(10) .twig,
.tree li:nth-child(11) .twig {
  width: 10px;
  height: 10px;
}

.tree .muted span {
  color: #666;
}

.tree .selected {
  background: #5285a6;
  color: #fff;
}

.tree .parent {
  background: #454f5a;
}

.vscroll {
  width: 6.5px;
  display: flex;
  flex-direction: column;
  align-items: center;
  background: #444;
  gap: 2px;
  padding: 1px 0;
}

.vscroll .track {
  flex: 1;
  width: 5px;
  background: #5d5d5d;
}

.hscroll {
  height: 8px;
  display: flex;
  align-items: center;
  gap: 2px;
  padding: 0 7px 0 1.5px;
}

.hscroll .track {
  flex: 1;
  height: 5px;
  background: #5d5d5d;
}

.dots {
  height: 1.5px;
  width: 96px;
  align-self: center;
  background: repeating-linear-gradient(90deg, #5a5a5a 0 1px, transparent 1px 2px);
}

.outliner-box .dots {
  margin: 0 0 1px;
}

.view-panel {
  width: 767px;
  padding-left: 3px;
  background: #3a3a3a;
  display: flex;
  flex-direction: column;
}

.view-panel .panel-menu {
  background: #444;
  padding-left: 5px;
  padding-top: 3px;
}

.panel-tools {
  height: 12px;
  display: flex;
  align-items: center;
  background: #444;
}

.panel-tools .cell {
  height: 10px;
}

.panel-tools .cell.field {
  height: 8px;
}

.panel-tools .ic {
  width: 7.5px;
  height: 7.5px;
}

.select.aces {
  width: 90px;
  margin-left: 1px;
  color: #aaa;
  font-size: 5.3px;
}

.viewport {
  position: relative;
  width: 763px;
  height: 509px;
  flex: none;
  background: linear-gradient(#a5005c 0%, #9b2282 16%, #8c4aa2 38%, #7c5eb2 55%, #6075be 76%, #4088c8 89%, #1b95cf 100%);
}

.scene {
  display: block;
  width: 763px;
  height: 509px;
}

.viewcube text {
  font-size: 3.6px;
  font-weight: 700;
  fill: #8f4a7a;
  text-anchor: middle;
}

.axis text {
  font-size: 6px;
  font-weight: 700;
}

.camera {
  font-size: 5.5px;
  font-weight: 700;
  fill: #fff;
  text-anchor: middle;
}

.tearoff {
  position: absolute;
  left: 6px;
  top: 7.5px;
  width: 129.5px;
  background: #525252;
  color: #dcdcdc;
  box-shadow: 1px 2px 5px rgba(0, 0, 0, 0.25);
}

.tearoff-title {
  height: 14.5px;
  background: #fafafa;
  color: #9a9a9a;
  display: flex;
  align-items: center;
  justify-content: space-between;
  font-size: 5.5px;
  padding: 0 1.5px 0 4px;
}

.tearoff-title i {
  width: 8px;
  height: 9px;
  background: #e3e3e3;
}

.tearoff-body {
  background: linear-gradient(90deg, #414141 10.5px, #525252 10.5px);
}

.item {
  height: 10px;
  display: flex;
  align-items: center;
  padding-right: 3px;
}

.gutter {
  width: 10.5px;
  display: flex;
  justify-content: center;
}

.gutter .ic {
  width: 7px;
  height: 7px;
}

.item .label {
  flex: 1;
  padding-left: 7px;
}

.optbox {
  width: 6px;
  height: 6px;
  border: 0.8px solid #a0a0a0;
}

.sep {
  height: 2.5px;
  margin-left: 14px;
  border-top: 1px solid #6c6c6c;
}

.section {
  height: 7.7px;
  display: flex;
  align-items: center;
  gap: 4px;
  color: #999;
  padding-left: 11.5px;
}

.section i {
  flex: 1;
  height: 1px;
  background: #626262;
}

.dialog {
  position: absolute;
  left: 181px;
  top: 23.5px;
  width: 273px;
  height: 190px;
  display: flex;
  flex-direction: column;
  background: #444;
  border: 1px solid #383838;
  border-radius: 3px 3px 1px 1px;
  box-shadow: 0 6px 18px rgba(20, 0, 40, 0.5);
  overflow: hidden;
  font-size: 5.3px;
}

.dialog-title {
  height: 14px;
  flex: none;
  display: flex;
  align-items: center;
  background: #edf6f7;
  color: #555;
  font-size: 5.7px;
  padding: 0 7.5px 0 4px;
}

.dialog-title .ic {
  width: 6.5px;
  height: 6.5px;
}

.dialog-title span {
  margin: 0 auto 0 3px;
}

.dialog-title .btn {
  margin-left: 17.2px;
  width: 6px;
  height: 6px;
}

.dialog-menu {
  height: 12.8px;
  flex: none;
  display: flex;
  gap: 8px;
  padding: 1px 0 0 4px;
  font-size: 5.15px;
}

.dialog-body {
  flex: 1;
  margin: 0 2px 2px;
  border-bottom: 1px solid #363636;
}

.field-row {
  height: 9.1px;
  display: flex;
  align-items: center;
}

.field-row label {
  width: 84px;
  text-align: right;
  margin-right: 3.5px;
}

.field-row.axes label {
  width: 86px;
}

.check {
  width: 6.5px;
  height: 6.5px;
  background: #2b2b2b;
  font-style: normal;
  line-height: 6.5px;
  color: #fff;
  font-size: 7px;
  text-align: center;
  font-family: "DejaVu Sans", sans-serif;
}

.axes .check + span {
  margin-left: 2.5px;
}

.axis-opt {
  width: 41.3px;
  display: flex;
  align-items: center;
  gap: 2.5px;
}

.select.layer {
  width: 29px;
  height: 9px;
  color: #eee;
}

.group-head {
  height: 10.5px;
  line-height: 10px;
  margin: 1.7px 0 -0.2px;
  background: #5b5b5b;
  font-weight: 700;
  color: #ddd;
  padding-left: 5px;
  font-size: 5px;
}

.field-row.weight {
  height: 11px;
}

.weight .num {
  width: 39px;
  height: 9px;
  margin-left: -1px;
}

.slider {
  flex: 1;
  height: 2px;
  margin: 0 3px 0 2px;
  background: #2b2b2b;
  display: flex;
  align-items: center;
  justify-content: flex-end;
}

.slider i {
  width: 3px;
  height: 8px;
  background: #c4c4c4;
}

.dialog-buttons {
  height: 16.5px;
  flex: none;
  display: flex;
  gap: 2px;
  padding: 2px 1.5px 1.5px;
}

.dialog-buttons button {
  flex: 1;
  border: 0;
  padding: 0;
  background: #5d5d5d;
  color: #e0e0e0;
  font: inherit;
}

.pointer {
  position: absolute;
  left: 289px;
  top: 81.5px;
  width: 10px;
  height: 10px;
}

.side-tabs {
  width: 11px;
  background: #3b3b3b;
  display: flex;
  flex-direction: column;
  align-items: center;
  gap: 10px;
  padding-top: 8px;
  color: #8c8c8c;
}

.side-tabs span,
.far-tabs span {
  writing-mode: vertical-rl;
  line-height: 7px;
}

.side-tabs span {
  transform: rotate(180deg);
}

.channels {
  width: 186px;
  display: flex;
  flex-direction: column;
  padding: 2px 3px 0;
}

.channel-icons {
  height: 10px;
  display: flex;
  justify-content: flex-end;
  align-items: center;
  gap: 4px;
  padding-right: 1px;
}

.channel-icons .ic {
  width: 7px;
  height: 7px;
}

.channels .panel-menu {
  padding-left: 3px;
}

.node-name {
  height: 9px;
  line-height: 10px;
  font-weight: 700;
  color: #ddd;
  font-size: 4.95px;
}

.attr {
  height: 8px;
  display: flex;
  justify-content: flex-end;
  padding-right: 1px;
}

.attr div {
  width: 37px;
  background: #2b2b2b;
  border-bottom: 0.5px solid #3a3a3a;
  margin-left: 2.5px;
  padding-left: 4.5px;
}

.well {
  background: #2b2b2b;
  border: 1px solid #383838;
}

.well.top {
  height: 144px;
  margin-top: 8px;
}

.channels > .dots {
  width: 62px;
  margin: 2px 0;
}

.layer-tabs {
  height: 9px;
  display: flex;
  align-items: center;
  color: #777;
  background: linear-gradient(90deg, #444 28px, #393939 28px);
  padding-left: 4px;
  gap: 12px;
}

.layer-tabs .active {
  color: #e0e0e0;
}

.channels .layer-menu {
  height: 10px;
}

.layer-icons {
  height: 12px;
  display: flex;
  align-items: center;
  justify-content: flex-end;
  gap: 4.5px;
  padding-right: 3px;
}

.layer-icons .ic {
  width: 8px;
  height: 8px;
}

.well.bottom {
  height: 240px;
}

.far-tabs {
  width: 8px;
  display: flex;
  flex-direction: column;
  align-items: center;
  gap: 11px;
  padding-top: 7px;
  color: #888;
  background: #393939;
}

.far-tabs .active {
  color: #e0e0e0;
}

.timeline {
  height: 20px;
  flex: none;
  display: flex;
  align-items: center;
  padding-left: 2px;
  border-top: 1px solid #363636;
}

.timeline .grip,
.range .grip {
  margin-right: 3px;
}

.frames {
  width: 1125px;
  height: 16px;
  background: #2b2b2b;
  display: flex;
  padding-left: 5px;
  overflow: hidden;
}

.current {
  width: 8.8px;
  flex: none;
  background: #555;
  color: #eee;
  padding: 8px 0 0 2px;
}

.frame {
  width: 18.57px;
  flex: none;
  color: #777;
  line-height: 6px;
  padding-left: 2.5px;
  background: linear-gradient(#808080, #808080) 0 100% / 1px 8px no-repeat;
}

.frame-field {
  width: 45px;
  height: 9.5px;
  margin-left: 3.5px;
}

.playback {
  display: flex;
  gap: 2.2px;
  margin-left: 4px;
}

.playback .ic {
  width: 9.5px;
  height: 9.5px;
}

.range {
  height: 19px;
  flex: none;
  display: flex;
  align-items: center;
  padding-left: 2px;
  border-top: 1px solid #363636;
}

.range .num {
  width: 45px;
  height: 12px;
  margin-right: 3.5px;
}

.range-track {
  width: 777px;
  flex: none;
  height: 11px;
  background: #393939;
  margin: 0 3.5px 0 2px;
}

.range-bar {
  width: 467px;
  height: 9px;
  margin: 1px;
  background: #5d5d5d;
  display: flex;
  align-items: center;
  gap: 3px;
  padding: 0 1.5px;
}

.range-bar i {
  width: 7px;
  height: 7px;
  background: #959595;
}

.range-bar span {
  margin-left: auto;
  margin-right: -1px;
}

.range .num + .cell {
  margin-left: -3px;
}

.range .cell.text {
  padding-left: 3px;
}

.range .select {
  width: 42px;
}

.range .red {
  height: 12px;
}

.range .red .ic {
  background: #b4202c;
  width: 12px;
  height: 12px;
}

.helpline {
  height: 17px;
  flex: none;
  display: flex;
  align-items: center;
  padding: 1px 0 0 2px;
  border-top: 1px solid #363636;
}

.q {
  width: 8px;
  height: 8px;
  margin: 0 4px 0 3px;
  border-radius: 50%;
  background: #8db43f;
  color: #fff;
  text-align: center;
  font-size: 6px;
}

.help-text {
  width: 651px;
  font-size: 4.76px;
}

.mel {
  margin: 0 6px 0 9.5px;
}

.cmd {
  width: 281px;
  height: 11px;
  background: #2b2b2b;
  margin-right: 4px;
}

.helpline .ic {
  margin: 0 0 0 -1px;
}

.animbot {
  height: 23px;
  flex: none;
  display: flex;
  align-items: center;
  border-top: 1px solid #363636;
}

.animbot .magnet {
  width: 10px;
  height: 10px;
  margin: 0 346px 0 10.5px;
}

.animbot .magnet + .ic {
  margin-left: -6px;
  margin-right: 3.5px;
}

.animbot .num {
  width: 16px;
  height: 12px;
  margin-left: 2px;
}

.animbot .power {
  margin: 0 8px 0 5px;
}

.tween {
  flex: none;
  display: flex;
  align-items: center;
  justify-content: space-between;
  background: linear-gradient(#383838, #383838) center / 100% 3px no-repeat;
  margin-right: 15.5px;
}

.tween + .tween.yellow + .tween {
  margin-left: -6px;
  margin-right: 12px;
}

.tween .sq {
  width: 3px;
  height: 3px;
  background: #5fbf7c;
}

.tween .dot {
  width: 1px;
  height: 1px;
  background: #aaa;
}

.tween b {
  width: 12px;
  height: 9px;
  background: #3c3c3c;
  border-radius: 2px;
  text-align: center;
  color: #4fa56a;
  line-height: 9px;
}

.tween.yellow .sq {
  background: #bcd62f;
}

.tween.yellow b {
  color: #a8bf35;
}

.animbot .cell .ic {
  width: 9px;
  height: 9px;
}

.taskbar {
  height: 24px;
  flex: none;
  display: flex;
  align-items: center;
  padding-left: 5px;
  background: linear-gradient(90deg, #1b1e33 0%, #1a2038 15%, #16284a 33%, #1f2048 40%, #241b45 46%, #1b1f45 60%, #1b2150 100%);
}

.app-icon {
  width: 22.1px;
  height: 22px;
  display: flex;
  align-items: center;
  justify-content: center;
}

.app-icon.open {
  background: linear-gradient(#8f95a8, #8f95a8) center 100% / 3px 1.5px no-repeat;
}

.app-icon.focused {
  background: linear-gradient(#c3cdd8, #c3cdd8) center 100% / 8px 1.5px no-repeat, #2a2f48;
  width: 19px;
  margin: 0 1.5px;
}

.app-icon .ic {
  width: 12.5px;
  height: 12.5px;
}

.tray {
  margin-left: auto;
  display: flex;
  align-items: center;
  color: #fff;
  font-size: 6px;
}

.tray .ic {
  width: 8px;
  height: 8px;
}

.tray .mic {
  margin: 0 8px;
}

.tray .volume {
  margin: 0 8px 0 4px;
}

.clock {
  display: flex;
  flex-direction: column;
  text-align: right;
}

.tray .bell {
  margin: 0 10px 0 4px;
}
</style>
